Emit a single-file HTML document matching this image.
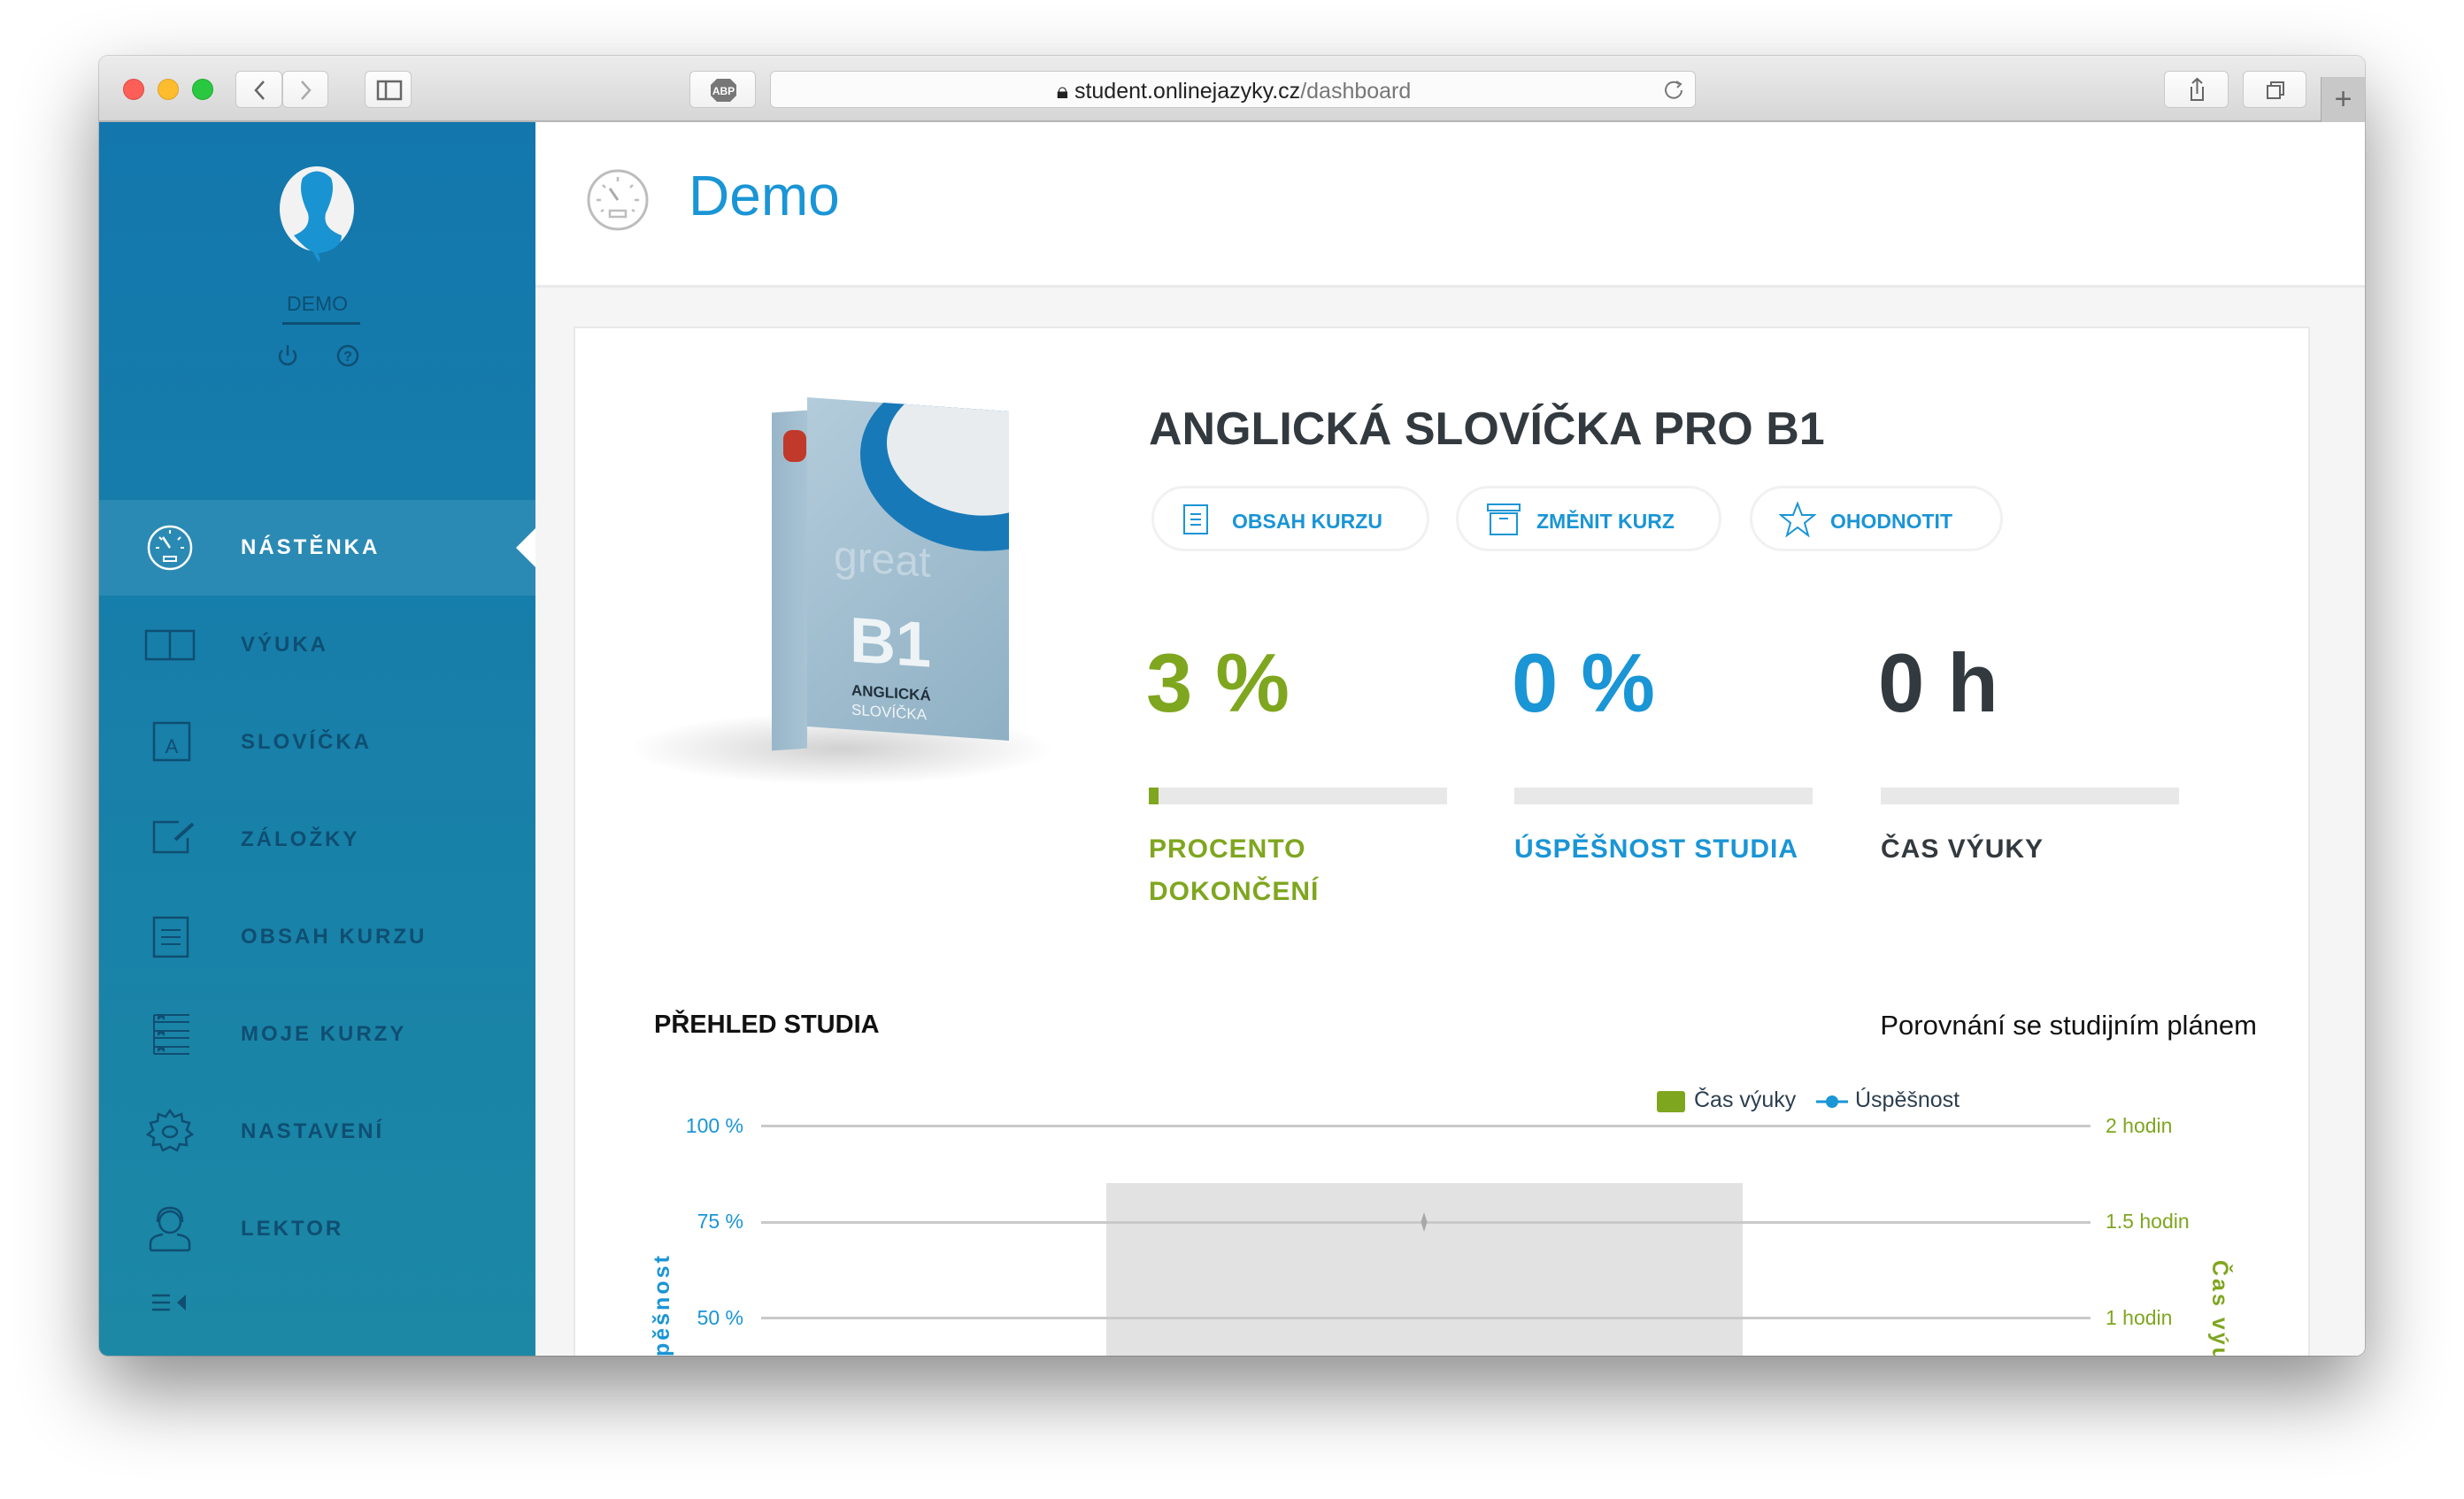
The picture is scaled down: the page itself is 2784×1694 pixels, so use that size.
<!DOCTYPE html>
<html><head><meta charset="utf-8"><style>
*{margin:0;padding:0;box-sizing:border-box}
body{width:2784px;height:1694px;background:#fff;font-family:"Liberation Sans",sans-serif;position:relative;overflow:hidden}
.win{position:absolute;left:112px;top:63px;width:2560px;height:1469px;border-radius:10px;overflow:hidden;box-shadow:0 40px 90px rgba(0,0,0,.45),0 0 0 1px rgba(0,0,0,.15);background:#f5f5f5}
.tb{position:absolute;left:0;top:0;width:2560px;height:75px;background:linear-gradient(#ececec,#d6d6d6);border-bottom:2px solid #b4b4b4}
.dot{position:absolute;top:26px;width:24px;height:24px;border-radius:50%}
.btn{position:absolute;top:17px;height:42px;background:linear-gradient(#fdfdfd,#f1f1f1);border:1px solid #c9c9c9;border-radius:6px}
.abs{position:absolute}
.side{position:absolute;left:0;top:75px;width:493px;height:1394px;background:linear-gradient(#1377ad,#1c88a5)}
.item{position:absolute;left:0;width:493px;height:108px}
.item span{position:absolute;left:160px;top:40px;font-size:24px;font-weight:bold;letter-spacing:3px;color:#0f4e72}
.item svg{position:absolute;left:50px;top:24px}
.main{position:absolute;left:493px;top:75px;width:2067px;height:1394px;background:#f5f5f5}
.hdr{position:absolute;left:0;top:0;width:2067px;height:187px;background:#fff;border-bottom:3px solid #eaeaea}
.card{position:absolute;left:43px;top:231px;width:1962px;height:1200px;background:#fff;border:2px solid #e8e8e8}
.pill{position:absolute;top:178px;height:74px;border:3px solid #f1f1f1;border-radius:37px;font-size:23px;font-weight:bold;color:#1a95d5}
.pill span{position:absolute;top:24px}
.big{position:absolute;top:354px;font-size:94px;font-weight:bold;line-height:1}
.bar{position:absolute;top:519px;width:337px;height:19px;background:#e8e8e8}
.lbl{position:absolute;top:565px;font-size:30px;font-weight:bold;line-height:48px;letter-spacing:1px}
.grid{position:absolute;left:210px;width:1502px;height:3px;background:#c9c9c9}
.yl{position:absolute;font-size:23px;color:#1a95d5;text-align:right;width:100px}
.yr{position:absolute;font-size:23px;color:#7fa61f}
</style></head><body>
<div class="win">
 <div class="tb">
  <div class="dot" style="left:27px;background:#fc5f57;border:1px solid #de4a43"></div>
  <div class="dot" style="left:66px;background:#fdbc2e;border:1px solid #dea02a"></div>
  <div class="dot" style="left:105px;background:#29c840;border:1px solid #1eab31"></div>
  <div class="btn" style="left:154px;width:53px"><svg width="53" height="42"><path d="M31 11 L22 21 L31 31" stroke="#666" stroke-width="2.5" fill="none"/></svg></div>
  <div class="btn" style="left:207px;width:52px"><svg width="52" height="42"><path d="M21 11 L30 21 L21 31" stroke="#aaa" stroke-width="2.5" fill="none"/></svg></div>
  <div class="btn" style="left:300px;width:53px"><svg width="53" height="42"><rect x="14" y="11" width="26" height="20" fill="none" stroke="#666" stroke-width="2.5"/><line x1="23" y1="11" x2="23" y2="31" stroke="#666" stroke-width="2.5"/></svg></div>
  <div class="btn" style="left:667px;width:75px"><svg width="75" height="42"><polygon points="30,8 45,8 52,15 52,27 45,34 30,34 23,27 23,15" fill="#777"/><text x="37.5" y="26" font-size="12" font-weight="bold" fill="#fff" text-anchor="middle" font-family="Liberation Sans">ABP</text></svg></div>
  <div class="btn" style="left:758px;width:1046px;background:#fbfbfb"><div class="abs" style="left:0;width:1046px;top:8px;text-align:center;font-size:25px;color:#222">🔒︎<span style="font-size:25px"> student.onlinejazyky.cz</span><span style="color:#777">/dashboard</span></div>
  <svg class="abs" style="left:1008px;top:8px" width="26" height="26"><path d="M18 6 A9 9 0 1 0 21 13" fill="none" stroke="#777" stroke-width="2"/><path d="M15 3 L20 6 L16 10" fill="none" stroke="#777" stroke-width="2"/></svg></div>
  <div class="btn" style="left:2333px;width:73px"><svg width="73" height="42"><path d="M30 17 L30 32 L43 32 L43 17" fill="none" stroke="#666" stroke-width="2"/><path d="M36.5 8 L36.5 25 M31 13 L36.5 8 L42 13" fill="none" stroke="#666" stroke-width="2"/></svg></div>
  <div class="btn" style="left:2422px;width:72px"><svg width="72" height="42"><rect x="27" y="16" width="14" height="14" fill="none" stroke="#666" stroke-width="2"/><path d="M31 16 L31 12 L45 12 L45 26 L41 26" fill="none" stroke="#666" stroke-width="2"/></svg></div>
  <div class="abs" style="left:2510px;top:24px;width:50px;height:51px;background:#c8c8c8;border-left:1px solid #aaa;font-size:34px;color:#666;text-align:center;line-height:51px">+</div>
 </div>
 <div class="side">
  <svg class="abs" style="left:200px;top:48px" width="95" height="110"><ellipse cx="46" cy="50" rx="42" ry="48" fill="#f2f2f2"/><path d="M20 80 Q40 72 36 55 Q24 30 30 15 Q46 0 62 15 Q68 30 56 55 Q52 72 74 80 Q74 95 50 100 Q38 102 20 80Z" fill="#1a93d2"/><path d="M46 98 Q52 108 48 110 L42 100Z" fill="#1a93d2"/></svg>
  <div class="abs" style="left:200px;top:192px;width:93px;text-align:center;font-size:23px;color:#0d4f73">DEMO</div>
  <div class="abs" style="left:207px;top:226px;width:88px;height:3px;background:#0d4f73"></div>
  <svg class="abs" style="left:198px;top:249px" width="30" height="30"><path d="M9 9 A9 9 0 1 0 21 9" fill="none" stroke="#0d4f73" stroke-width="2.5"/><line x1="15" y1="3" x2="15" y2="15" stroke="#0d4f73" stroke-width="2.5"/></svg>
  <svg class="abs" style="left:266px;top:249px" width="30" height="30"><circle cx="15" cy="15" r="11" fill="none" stroke="#0d4f73" stroke-width="2.5"/><text x="15" y="21" font-size="16" font-weight="bold" fill="#0d4f73" text-anchor="middle" font-family="Liberation Sans">?</text></svg>
  <div class="item" style="top:427px;background:#2b8ab4"><svg width="60" height="60"><circle cx="30" cy="30" r="24" fill="none" stroke="#fff" stroke-width="2.5"/><line x1="30" y1="30" x2="22" y2="18" stroke="#fff" stroke-width="2.5"/><rect x="23" y="40" width="14" height="5" fill="none" stroke="#fff" stroke-width="2"/><path d="M30 10v4M14 30h4M42 30h4M18 18l3 3M42 18l-3 3" stroke="#fff" stroke-width="2"/></svg><span style="color:#fff">NÁSTĚNKA</span>
   <div class="abs" style="left:471px;top:32px;width:0;height:0;border-top:22px solid transparent;border-bottom:22px solid transparent;border-right:22px solid #fff"></div></div>
  <div class="item" style="top:537px"><svg width="60" height="60"><path d="M3 14 H30 V46 H3Z M30 14 H57 V46 H30Z" fill="none" stroke="#0f4e72" stroke-width="2.5"/></svg><span>VÝUKA</span></div>
  <div class="item" style="top:647px"><svg width="60" height="60"><rect x="12" y="8" width="40" height="42" fill="none" stroke="#0f4e72" stroke-width="2.5"/><text x="32" y="42" font-size="22" fill="#0f4e72" text-anchor="middle" font-family="Liberation Sans">A</text></svg><span>SLOVÍČKA</span></div>
  <div class="item" style="top:757px"><svg width="60" height="60"><path d="M40 10 H12 V44 H50 V28" fill="none" stroke="#0f4e72" stroke-width="2.5"/><path d="M36 30 L56 12" stroke="#0f4e72" stroke-width="4"/></svg><span>ZÁLOŽKY</span></div>
  <div class="item" style="top:867px"><svg width="60" height="60"><rect x="12" y="8" width="38" height="44" fill="none" stroke="#0f4e72" stroke-width="2.5"/><path d="M20 22h22M20 30h22M20 38h22" stroke="#0f4e72" stroke-width="2"/></svg><span>OBSAH KURZU</span></div>
  <div class="item" style="top:977px"><svg width="60" height="60"><path d="M12 8h40M12 16h40M12 26h40M12 34h40M12 44h40M12 52h40M12 8v44" stroke="#0f4e72" stroke-width="2"/><path d="M16 8h8v6l-4-3-4 3z M16 26h8v6l-4-3-4 3z M16 44h8v6l-4-3-4 3z" fill="#0f4e72"/></svg><span>MOJE KURZY</span></div>
  <div class="item" style="top:1087px"><svg width="60" height="60"><path d="M30 6 l5 7 8-3 1 8 8 2-3 8 6 5-7 4 1 8-8-1-3 7-8-4-8 4-3-7-8 1 1-8-7-4 6-5-3-8 8-2 1-8 8 3z" fill="none" stroke="#0f4e72" stroke-width="2.5"/><ellipse cx="30" cy="30" rx="8" ry="6" fill="none" stroke="#0f4e72" stroke-width="2.5"/></svg><span>NASTAVENÍ</span></div>
  <div class="item" style="top:1197px"><svg width="60" height="60"><circle cx="30" cy="22" r="12" fill="none" stroke="#0f4e72" stroke-width="2.5"/><path d="M8 54 V46 Q8 38 22 36 M52 54 V46 Q52 38 38 36 M8 54 H52" fill="none" stroke="#0f4e72" stroke-width="2.5"/><path d="M16 22 Q16 6 30 6 Q44 6 44 22" fill="none" stroke="#0f4e72" stroke-width="2.5"/></svg><span>LEKTOR</span></div>
  <svg class="abs" style="left:58px;top:1322px" width="50" height="24"><path d="M2 4h20M2 12h20M2 20h20" stroke="#0f4e72" stroke-width="2.5"/><path d="M40 3 L30 12 L40 21Z" fill="#0f4e72"/></svg>
 </div>
 <div class="main">
  <div class="hdr">
   <svg class="abs" style="left:56px;top:51px" width="74" height="74"><circle cx="37" cy="37" r="33" fill="none" stroke="#bdbdbd" stroke-width="3"/><line x1="37" y1="37" x2="28" y2="24" stroke="#aaa" stroke-width="3"/><rect x="28" y="49" width="18" height="7" fill="none" stroke="#bdbdbd" stroke-width="2.5"/><path d="M37 11v5M13 37h5M56 37h5M20 20l3 3M54 20l-3 3M18 50l3-2M56 50l-3-2" stroke="#bdbdbd" stroke-width="2.5"/></svg>
   <div class="abs" style="left:173px;top:46px;font-size:64px;color:#1a95d5">Demo</div>
  </div>
  <div class="card">
   <div class="abs" style="left:40px;top:430px;width:520px;height:90px;background:radial-gradient(ellipse,rgba(0,0,0,.18),rgba(0,0,0,0) 65%)"></div>
   <div class="abs" style="left:222px;top:94px;width:40px;height:382px;background:linear-gradient(90deg,#98b6c9,#a8c3d3);transform:skewY(-4deg)"></div>
   <div class="abs" style="left:262px;top:86px;width:228px;height:372px;background:linear-gradient(135deg,#b3ccdb,#8fb0c4);transform:skewY(4deg);overflow:hidden">
    <div class="abs" style="left:60px;top:-40px;width:260px;height:200px;border-radius:50%;background:#1879b8"></div>
    <div class="abs" style="left:90px;top:-30px;width:200px;height:150px;border-radius:50%;background:#e8ecef"></div>
    <div class="abs" style="left:48px;top:230px;font-size:72px;font-weight:bold;color:#eef3f6">B1</div>
    <div class="abs" style="left:50px;top:318px;font-size:17px;font-weight:bold;color:#20303c">ANGLICKÁ</div>
    <div class="abs" style="left:50px;top:340px;font-size:17px;color:#f0f4f6">SLOVÍČKA</div>
    <div class="abs" style="left:30px;top:150px;font-size:48px;color:rgba(255,255,255,.35)">great</div>
   </div>
   <div class="abs" style="left:235px;top:115px;width:26px;height:36px;background:#c0392b;border-radius:10px"></div>
   <div class="abs" style="left:648px;top:84px;font-size:52px;font-weight:bold;color:#333a3f">ANGLICKÁ SLOVÍČKA PRO B1</div>
   <div class="pill" style="left:651px;width:314px"><svg class="abs" style="left:32px;top:17px" width="32" height="36"><rect x="2" y="2" width="26" height="32" fill="none" stroke="#1a95d5" stroke-width="2"/><path d="M9 12h12M9 18h12M9 24h12" stroke="#1a95d5" stroke-width="2"/></svg><span style="left:88px">OBSAH KURZU</span></div>
   <div class="pill" style="left:995px;width:300px"><svg class="abs" style="left:32px;top:16px" width="40" height="38"><rect x="1" y="2" width="36" height="7" fill="none" stroke="#1a95d5" stroke-width="2"/><rect x="4" y="12" width="30" height="24" fill="none" stroke="#1a95d5" stroke-width="2"/><path d="M14 18h10" stroke="#1a95d5" stroke-width="2"/></svg><span style="left:88px">ZMĚNIT KURZ</span></div>
   <div class="pill" style="left:1327px;width:286px"><svg class="abs" style="left:30px;top:14px" width="42" height="42"><path d="M21 3 L26 16 L40 16 L29 25 L33 39 L21 30 L9 39 L13 25 L2 16 L16 16Z" fill="none" stroke="#1a95d5" stroke-width="2"/></svg><span style="left:88px">OHODNOTIT</span></div>
   <div class="big" style="left:645px;color:#7fa61f">3 %</div>
   <div class="big" style="left:1058px;color:#1a95d5">0 %</div>
   <div class="big" style="left:1472px;color:#333a3f">0 h</div>
   <div class="bar" style="left:648px"><div style="width:11px;height:19px;background:#7fa61f"></div></div>
   <div class="bar" style="left:1061px"></div>
   <div class="bar" style="left:1475px"></div>
   <div class="lbl" style="left:648px;color:#7fa61f">PROCENTO<br>DOKONČENÍ</div>
   <div class="lbl" style="left:1061px;color:#1a95d5">ÚSPĚŠNOST STUDIA</div>
   <div class="lbl" style="left:1475px;color:#333a3f">ČAS VÝUKY</div>
   <div class="abs" style="left:89px;top:771px;font-size:29px;font-weight:bold;color:#111">PŘEHLED STUDIA</div>
   <div class="abs" style="right:58px;top:770px;font-size:31px;color:#111">Porovnání se studijním plánem</div>
   <div class="abs" style="left:1222px;top:862px;width:32px;height:24px;background:#7fa61f;border-radius:3px"></div>
   <div class="abs" style="left:1264px;top:858px;font-size:25px;color:#2b3e50">Čas výuky</div>
   <svg class="abs" style="left:1400px;top:862px" width="40" height="24"><line x1="2" y1="12" x2="38" y2="12" stroke="#1a95d5" stroke-width="3"/><circle cx="20" cy="12" r="7" fill="#1a95d5"/></svg>
   <div class="abs" style="left:1446px;top:858px;font-size:25px;color:#2b3e50">Úspěšnost</div>
   <div class="abs" style="left:600px;top:966px;width:719px;height:300px;background:#e1e2e1"></div>
   <div class="grid" style="top:900px"></div>
   <div class="grid" style="top:1009px"></div>
   <div class="grid" style="top:1117px"></div>
   <div class="abs" style="left:954px;top:999px;width:10px;height:22px;background:#a8a8a8;transform:scaleX(.7);clip-path:polygon(50% 0,100% 50%,50% 100%,0 50%)"></div>
   <div class="yl" style="left:90px;top:888px">100 %</div>
   <div class="yl" style="left:90px;top:996px">75 %</div>
   <div class="yl" style="left:90px;top:1105px">50 %</div>
   <div class="yr" style="left:1729px;top:888px">2 hodin</div>
   <div class="yr" style="left:1729px;top:996px">1.5 hodin</div>
   <div class="yr" style="left:1729px;top:1105px">1 hodin</div>
   <div class="abs" style="left:84px;top:1050px;height:150px;writing-mode:vertical-rl;transform:rotate(180deg);font-size:25px;font-weight:bold;color:#1a95d5;letter-spacing:3px;white-space:nowrap;text-align:left">Úspěšnost</div>
   <div class="abs" style="left:1843px;top:1053px;writing-mode:vertical-rl;font-size:25px;font-weight:bold;color:#7fa61f;letter-spacing:3px;white-space:nowrap">Čas výuky</div>
  </div>
 </div>
</div>
</body></html>
